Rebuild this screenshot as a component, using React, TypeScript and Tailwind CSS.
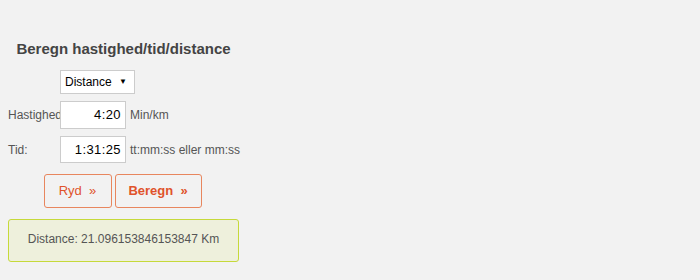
export default function App() {
  return (
    <div className="min-h-[280px] w-[700px] bg-[#f2f2f2] font-['Liberation_Sans',Arial,sans-serif] text-[12px] text-[#555]">
      <div className="flex w-[239px] flex-col pl-[8px] pt-[40px]">
        <h2 className="text-center text-[15px] font-bold leading-[18px] text-[#444]">Beregn hastighed/tid/distance</h2>

        <div className="mt-[12px] flex items-center pl-[52px]">
          <div className="flex h-[24px] w-[75px] shrink-0 items-center justify-between border border-[#ccc] bg-white pl-[4px] pr-[7px] text-[12px] text-black">
            <span>Distance</span>
            <span className="text-[8px]">▼</span>
          </div>
        </div>

        <div className="mt-[7px] flex items-center">
          <span className="w-[52px] shrink-0 whitespace-nowrap">Hastighed</span>
          <div className="relative flex h-[28px] w-[66px] shrink-0 items-center justify-end border border-[#ccc] bg-white pr-[4px] text-[13px] tracking-[0.4px] text-black">4:20</div>
          <span className="ml-[4px] whitespace-nowrap">Min/km</span>
        </div>

        <div className="mt-[7px] flex items-center">
          <span className="w-[52px] shrink-0">Tid:</span>
          <div className="relative flex h-[27px] w-[66px] shrink-0 items-center justify-end border border-[#ccc] bg-white pr-[4px] text-[13px] tracking-[0.4px] text-black">1:31:25</div>
          <span className="ml-[4px] whitespace-nowrap">tt:mm:ss eller mm:ss</span>
        </div>

        <div className="mt-[11px] flex justify-center gap-[3px] pr-[2px]">
          <button className="h-[34px] w-[68px] rounded-[3px] border border-[#e8865e] bg-[#f2f2f2] text-[13px] text-[#e0532b]">
            Ryd&nbsp;&nbsp;»
          </button>
          <button className="h-[34px] w-[87px] rounded-[3px] border border-[#e8865e] bg-[#f2f2f2] text-[13px] font-bold text-[#e0532b]">
            Beregn&nbsp;&nbsp;»
          </button>
        </div>

        <div className="mt-[11px] flex h-[43px] items-start justify-center rounded-[3px] border border-[#c6d93a] bg-[#eef0dc] pt-[10px] text-[12px] text-[#555]">
          Distance: 21.096153846153847 Km
        </div>
      </div>
    </div>
  )
}
